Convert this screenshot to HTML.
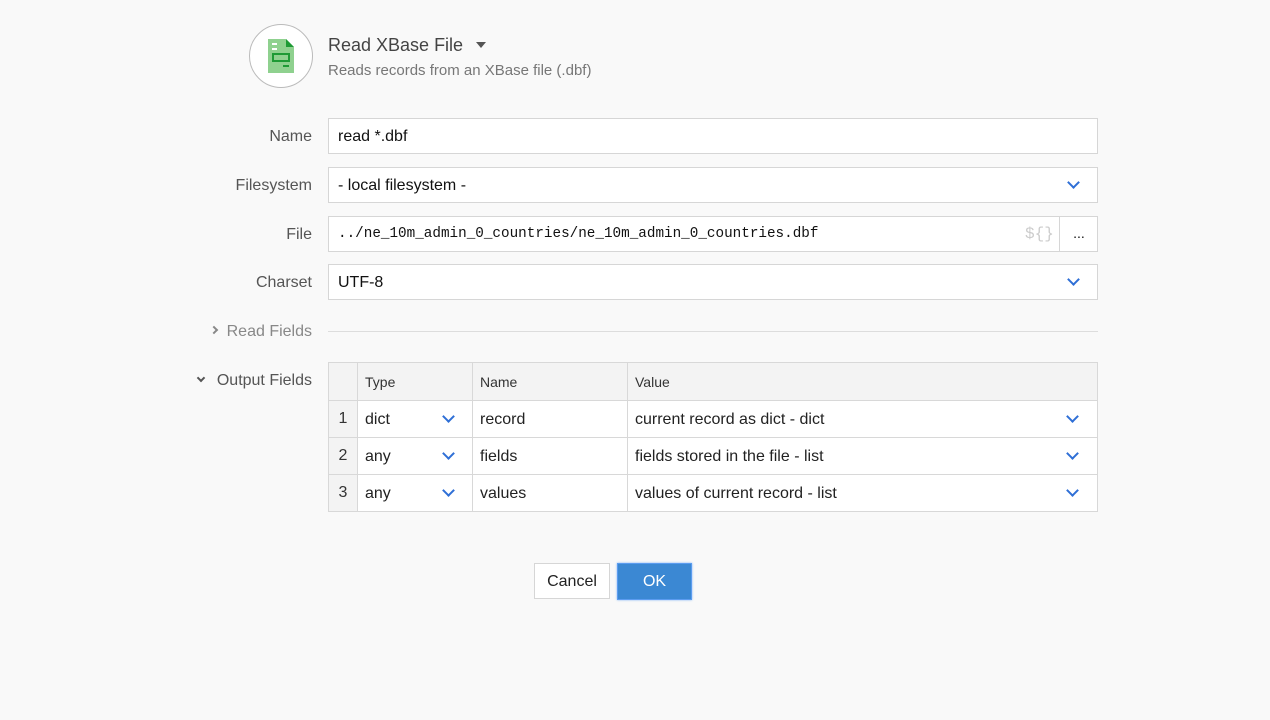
<!DOCTYPE html>
<html><head><meta charset="utf-8"><style>
*{box-sizing:border-box;margin:0;padding:0}
body{width:1270px;height:720px;background:#f9f9f9;font-family:"Liberation Sans",sans-serif;position:relative;overflow:hidden;color:#222}
.a{position:absolute}
.lbl{position:absolute;right:958px;font-size:16px;color:#555;text-align:right}
.inp{position:absolute;left:328px;width:770px;height:36px;background:#fff;border:1px solid #d6d6d6;font-size:16px;padding:0 9px;line-height:35px;color:#111}
.chev{position:absolute;width:9px;height:9px;border-right:2px solid #2f6fd6;border-bottom:2px solid #2f6fd6;transform:rotate(45deg)}
table{position:absolute;left:328px;top:362px;width:770px;border-collapse:collapse;font-size:16px}
td{border:1px solid #d8d8d8;height:37px;padding:1px 7px 0;background:#fff;position:relative}
tr.h td{background:#f3f3f3;height:38px;font-size:14px;color:#333}
td.n{background:#f3f3f3;text-align:center;padding:0;color:#333}
</style></head><body>
<div class="a" style="left:249px;top:24px;width:64px;height:64px;border-radius:50%;border:1px solid #bbb;background:#fff"></div>
<svg class="a" style="left:266px;top:38px" width="30" height="36" viewBox="0 0 30 36">
<path d="M2 1h18l8 8v26H2z" fill="#8fd18f"/><path d="M20 1l8 8h-8z" fill="#1e9a35"/>
<rect x="6" y="5" width="5" height="2" fill="#fff"/><rect x="6" y="10" width="5" height="2" fill="#fff"/>
<rect x="7" y="16" width="16" height="7" fill="none" stroke="#1e9a35" stroke-width="2"/>
<rect x="17" y="27" width="6" height="2" fill="#1e9a35"/></svg>
<div class="a" style="left:328px;top:35px;font-size:18px;color:#444">Read XBase File</div>
<div class="a" style="left:476px;top:42px;width:0;height:0;border-left:5px solid transparent;border-right:5px solid transparent;border-top:6px solid #555"></div>
<div class="a" style="left:328px;top:62px;font-size:15px;color:#777">Reads records from an XBase file (.dbf)</div>

<div class="lbl" style="top:128px">Name</div>
<div class="inp" style="top:118px">read *.dbf</div>
<div class="lbl" style="top:177px">Filesystem</div>
<div class="inp" style="top:167px">- local filesystem -<span class="chev" style="right:19px;top:10px"></span></div>
<div class="lbl" style="top:226px">File</div>
<div class="inp" style="top:216px;font-family:'Liberation Mono',monospace;font-size:14.3px">../ne_10m_admin_0_countries/ne_10m_admin_0_countries.dbf
<span class="a" style="left:696px;top:0;color:#ccc;font-size:16px">${}</span>
<span class="a" style="left:730px;top:-1px;width:39px;height:36px;border-left:1px solid #d6d6d6;text-align:center;font-family:'Liberation Sans';font-size:14px;line-height:34px">...</span></div>
<div class="lbl" style="top:274px">Charset</div>
<div class="inp" style="top:264px">UTF-8<span class="chev" style="right:19px;top:10px"></span></div>

<div class="a" style="left:211px;top:327px;width:6px;height:6px;border-right:2px solid #888;border-bottom:2px solid #888;transform:rotate(-45deg)"></div>
<div class="lbl" style="top:323px;color:#888">Read Fields</div>
<div class="a" style="left:328px;top:331px;width:770px;height:1px;background:#ddd"></div>
<div class="a" style="left:198px;top:375px;width:6px;height:6px;border-right:2px solid #555;border-bottom:2px solid #555;transform:rotate(45deg)"></div>
<div class="lbl" style="top:372px">Output Fields</div>

<table>
<tr class="h"><td class="n" style="width:29px"></td><td style="width:115px">Type</td><td style="width:155px">Name</td><td>Value</td></tr>
<tr><td class="n">1</td><td>dict<span class="chev" style="right:19px;top:11px"></span></td><td>record</td><td>current record as dict - dict<span class="chev" style="right:20px;top:11px"></span></td></tr>
<tr><td class="n">2</td><td>any<span class="chev" style="right:19px;top:11px"></span></td><td>fields</td><td>fields stored in the file - list<span class="chev" style="right:20px;top:11px"></span></td></tr>
<tr><td class="n">3</td><td>any<span class="chev" style="right:19px;top:11px"></span></td><td>values</td><td>values of current record - list<span class="chev" style="right:20px;top:11px"></span></td></tr>
</table>

<div class="a" style="left:534px;top:563px;width:76px;height:36px;background:#fff;border:1px solid #d6d6d6;font-size:16px;text-align:center;line-height:36px">Cancel</div>
<div class="a" style="left:617px;top:563px;width:75px;height:37px;background:#3b88d3;border:1px solid #5b9cf0;box-shadow:0 0 2px #7ab0f5;color:#fff;font-size:16px;text-align:center;line-height:36px">OK</div>
</body></html>
